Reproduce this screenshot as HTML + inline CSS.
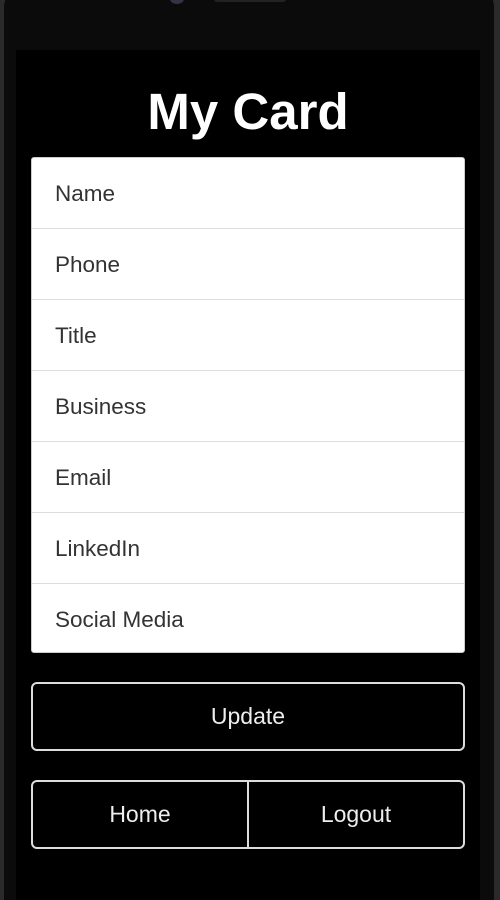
<!DOCTYPE html>
<html><head><style>
html,body{margin:0;width:500px;height:900px;overflow:hidden}
body{background:#2a2a2a;position:relative;font-family:"Liberation Sans",sans-serif}
.frame{position:absolute;left:4px;top:-20px;width:490px;height:920px;background:#0b0b0b;border-radius:28px 28px 0 0}
.screen{position:absolute;left:16px;top:50px;width:464px;height:850px;background:#000}
.cam{position:absolute;left:170px;top:-6px;width:14px;height:10px;border-radius:50%;background:#334}
.spk{position:absolute;left:214px;top:-4px;width:72px;height:6px;border-radius:3px;background:#222}
h1{position:absolute;left:0;top:84px;width:496px;margin:0;text-align:center;color:#fff;font-size:51px;font-weight:bold;line-height:56px}
.card{position:absolute;left:31px;top:157px;width:432px;height:494px;background:#fff;border:1px solid #ccc;border-radius:3px}
.row{height:70px;border-bottom:1px solid #ddd;line-height:72px;padding-left:23px;font-size:22.5px;color:#333}
.row:last-child{border-bottom:none}
.btn{position:absolute;left:31px;width:430px;height:65px;border:2px solid #ddd;border-radius:6px;color:#eee;font-size:23px;display:flex}
.btn div{flex:1;display:flex;align-items:center;justify-content:center}
.btn div+div{border-left:2px solid #ddd}
</style></head><body>
<div class="frame"></div>
<div class="cam"></div><div class="spk"></div>
<div class="screen"></div>
<h1>My Card</h1>
<div class="card">
<div class="row">Name</div><div class="row">Phone</div><div class="row">Title</div><div class="row">Business</div><div class="row">Email</div><div class="row">LinkedIn</div><div class="row">Social Media</div>
</div>
<div class="btn" style="top:682px"><div>Update</div></div>
<div class="btn" style="top:780px"><div>Home</div><div>Logout</div></div>
</body></html>
